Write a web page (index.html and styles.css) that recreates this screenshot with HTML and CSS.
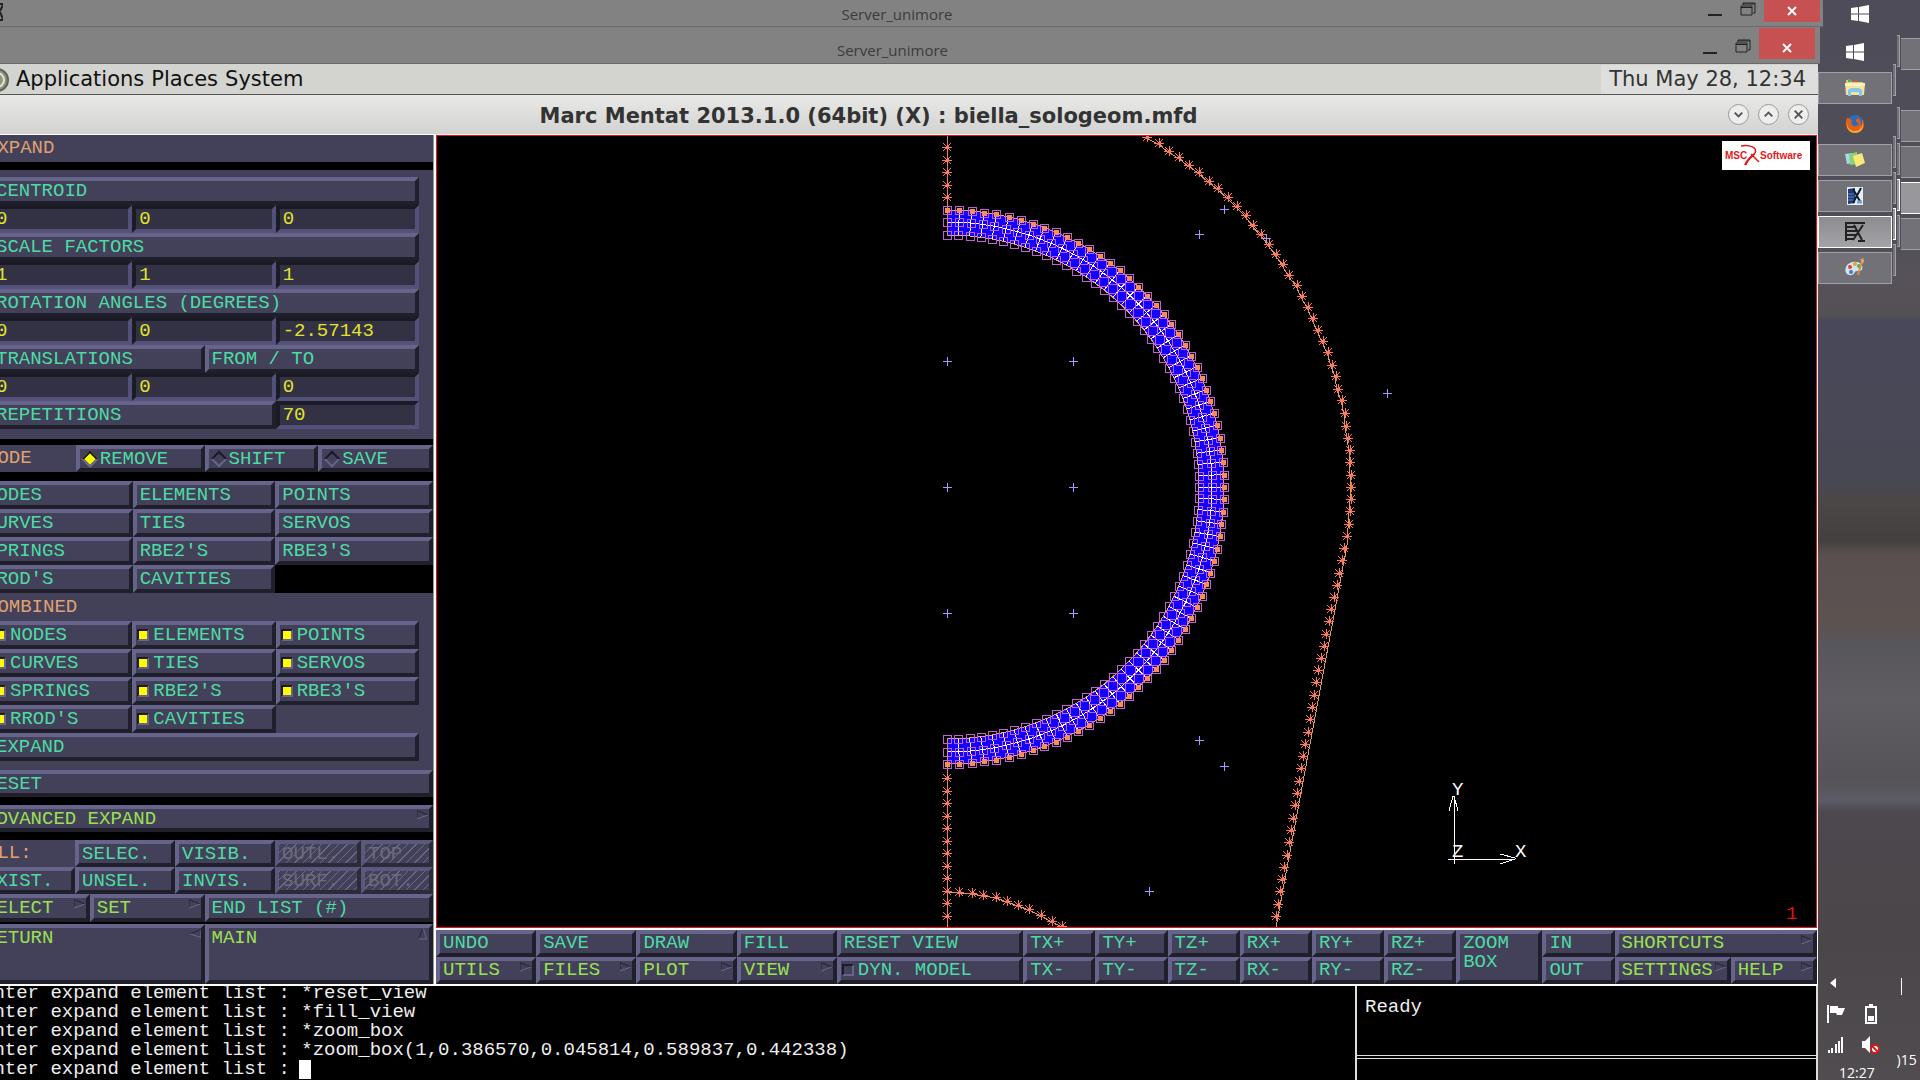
FILE: index.html
```
<!DOCTYPE html>
<html lang="en">
<head>
  <meta charset="UTF-8">
  <title>Server_unimore</title>
  <link rel="stylesheet" href="styles.css">
</head>
<body>
  <div class="screen">
    <div class="session">

      <header class="titlebar titlebar-back">
        <svg class="edge-mark" viewBox="0 0 3 18"><path d="M0 1h3M0 17h3M0 8l3-6M0 9l3 7" stroke="#222" stroke-width="2"/></svg>
        <span class="titlebar-name">Server_unimore</span>
        <div class="win-buttons">
          <button class="win-min" aria-label="Minimize"></button>
          <button class="win-max" aria-label="Restore"><svg viewBox="0 0 16 16"><path d="M1 5h11v9H1zM1 6.500h11M3 4V2h12v10h-2M3 3h12" fill="none" stroke="#222"/></svg></button>
          <button class="win-close" aria-label="Close"><svg viewBox="0 0 12 12"><path d="M2 2l8 8M10 2l-8 8" stroke="#fff" stroke-width="2"/></svg></button>
        </div>
      </header>

      <header class="titlebar titlebar-front">
        <span class="titlebar-name">Server_unimore</span>
        <div class="win-buttons">
          <button class="win-min" aria-label="Minimize"></button>
          <button class="win-max" aria-label="Restore"><svg viewBox="0 0 16 16"><path d="M1 5h11v9H1zM1 6.500h11M3 4V2h12v10h-2M3 3h12" fill="none" stroke="#222"/></svg></button>
          <button class="win-close" aria-label="Close"><svg viewBox="0 0 12 12"><path d="M2 2l8 8M10 2l-8 8" stroke="#fff" stroke-width="2"/></svg></button>
        </div>
      </header>

      <nav class="panel">
        <svg class="panel-logo" viewBox="0 0 24 24"><circle cx="12" cy="12" r="11" fill="#8d957f" stroke="#5d6653" stroke-width="2"/><circle cx="12" cy="12" r="7" fill="none" stroke="#dfe3d6" stroke-width="2"/></svg>
        <a href="#">Applications</a>
        <a href="#">Places</a>
        <a href="#">System</a>
        <span class="clock">Thu May 28, 12:34</span>
      </nav>

      <header class="app-title">
        <h1>Marc Mentat 2013.1.0 (64bit) (X) : biella_sologeom.mfd</h1>
        <div class="round-buttons">
          <button aria-label="Minimize"><svg viewBox="0 0 20 20"><path d="M6 8l4 4 4-4"/></svg></button>
          <button aria-label="Maximize"><svg viewBox="0 0 20 20"><path d="M6 12l4-4 4 4"/></svg></button>
          <button aria-label="Close"><svg viewBox="0 0 20 20"><path d="M6 6l8 8M14 6l-8 8"/></svg></button>
        </div>
      </header>

      <main class="app">
        <aside class="side">
          <h2 class="head head-top">EXPAND</h2>

          <section class="group">
            <button class="btn">CENTROID</button>
            <div class="row three">
              <input class="field" aria-label="Centroid X" value="0"><input class="field" aria-label="Centroid Y" value="0"><input class="field" aria-label="Centroid Z" value="0">
            </div>
            <button class="btn">SCALE FACTORS</button>
            <div class="row three">
              <input class="field" aria-label="Scale X" value="1"><input class="field" aria-label="Scale Y" value="1"><input class="field" aria-label="Scale Z" value="1">
            </div>
            <button class="btn">ROTATION ANGLES (DEGREES)</button>
            <div class="row three">
              <input class="field" aria-label="Rotation X" value="0"><input class="field" aria-label="Rotation Y" value="0"><input class="field" aria-label="Rotation Z" value="-2.57143">
            </div>
            <div class="row two">
              <button class="btn">TRANSLATIONS</button><button class="btn">FROM / TO</button>
            </div>
            <div class="row three">
              <input class="field" aria-label="Translation X" value="0"><input class="field" aria-label="Translation Y" value="0"><input class="field" aria-label="Translation Z" value="0">
            </div>
            <div class="row three">
              <button class="btn wide">REPETITIONS</button><input class="field" aria-label="Repetitions" value="70">
            </div>
          </section>

          <div class="row mode">
            <span class="head">MODE</span>
            <label class="btn"><input type="radio" name="mode" checked>REMOVE</label>
            <label class="btn"><input type="radio" name="mode">SHIFT</label>
            <label class="btn"><input type="radio" name="mode">SAVE</label>
          </div>

          <div class="row kinds">
            <button class="btn">NODES</button><button class="btn">ELEMENTS</button><button class="btn">POINTS</button>
            <button class="btn">CURVES</button><button class="btn">TIES</button><button class="btn">SERVOS</button>
            <button class="btn">SPRINGS</button><button class="btn">RBE2'S</button><button class="btn">RBE3'S</button>
            <button class="btn">RROD'S</button><button class="btn">CAVITIES</button>
          </div>

          <h2 class="head head-combined">COMBINED</h2>
          <section class="group group-combined">
            <div class="row three">
              <label class="btn"><input type="checkbox" checked>NODES</label><label class="btn"><input type="checkbox" checked>ELEMENTS</label><label class="btn"><input type="checkbox" checked>POINTS</label>
              <label class="btn"><input type="checkbox" checked>CURVES</label><label class="btn"><input type="checkbox" checked>TIES</label><label class="btn"><input type="checkbox" checked>SERVOS</label>
              <label class="btn"><input type="checkbox" checked>SPRINGS</label><label class="btn"><input type="checkbox" checked>RBE2'S</label><label class="btn"><input type="checkbox" checked>RBE3'S</label>
              <label class="btn"><input type="checkbox" checked>RROD'S</label><label class="btn"><input type="checkbox" checked>CAVITIES</label>
            </div>
            <button class="btn">EXPAND</button>
          </section>

          <button class="btn reset">RESET</button>
          <button class="btn go advanced">ADVANCED EXPAND<svg class="arrow" viewBox="0 0 12 9"><use href="#arrow-right"/></svg></button>

          <div class="row lists">
            <span class="head">ALL:</span><button class="btn">SELEC.</button><button class="btn">VISIB.</button><button class="btn" disabled>OUTL.</button><button class="btn" disabled>TOP</button>
            <button class="btn">EXIST.</button><button class="btn">UNSEL.</button><button class="btn">INVIS.</button><button class="btn" disabled>SURF.</button><button class="btn" disabled>BOT.</button>
          </div>
          <div class="row select">
            <button class="btn go">SELECT<svg class="arrow" viewBox="0 0 12 9"><use href="#arrow-right"/></svg></button>
            <button class="btn go">SET<svg class="arrow" viewBox="0 0 12 9"><use href="#arrow-right"/></svg></button>
            <button class="btn">END LIST (#)</button>
          </div>
          <div class="row back">
            <button class="btn go">RETURN<svg class="arrow" viewBox="0 0 12 9"><path d="M12 0L1 4.500" stroke="#232330"/><path d="M12 0v8L1 4.500" fill="none" stroke="#6a688c"/></svg></button>
            <button class="btn go">MAIN<svg class="arrow" viewBox="0 0 9 12"><path d="M4 1L0 11" stroke="#232330"/><path d="M5 1l3 10H0" fill="none" stroke="#6a688c"/></svg></button>
          </div>
        </aside>

        <section class="work">
          <div class="view">
            <svg class="model" id="model" viewBox="437 136 1379 791" preserveAspectRatio="none" shape-rendering="crispEdges">
              <defs>
                <g id="arrow-right"><path d="M0 8V0l11 4.500" fill="none" stroke="#232330"/><path d="M0 8.500l11-4" stroke="#6a688c"/></g>
                <path id="star" d="M-5 0H5M0-5V5M-4-4L4 4M4-4L-4 4M-1-1h2v2h-2z" stroke="#fa7860" fill="#fa7860"/>
                <path id="plus" d="M-4 0H5M0-4V5" stroke="#a898ff"/>
              </defs>
              <g class="axes">
                <path d="M1448 859h67M1454 864V797M1449 811l4-15h1l4 15M1500 854l15 4v1l-15 5"/>
                <text x="1452" y="795">Y</text>
                <text x="1515" y="857">X</text>
                <text x="1452" y="857">Z</text>
              </g>
              <text class="view-number" x="1786" y="919">1</text>
            </svg>
            <svg class="msc" viewBox="0 0 88 29" role="img" aria-label="MSC Software">
              <rect width="88" height="29" fill="#fff"/>
              <text x="3" y="18">MSC</text>
              <text x="38" y="18">Software</text>
              <path d="M19 5c9-2 17 2 14 7-2 4-8 6-9 12M29 13l8 8" fill="none" stroke="#e21a1a" stroke-width="1.500"/>
              <path d="M23 24c2-5 6-8 9-11" fill="none" stroke="#e21a1a" stroke-width="2"/>
            </svg>
          </div>
          <div class="tools">
            <button class="btn">UNDO</button><button class="btn">SAVE</button><button class="btn">DRAW</button><button class="btn">FILL</button><button class="btn">RESET VIEW</button>
            <button class="btn">TX+</button><button class="btn">TY+</button><button class="btn">TZ+</button><button class="btn">RX+</button><button class="btn">RY+</button><button class="btn">RZ+</button>
            <button class="btn zoom-box">ZOOM<br>BOX</button><button class="btn">IN</button>
            <button class="btn go shortcuts">SHORTCUTS<svg class="arrow" viewBox="0 0 12 9"><use href="#arrow-right"/></svg></button>

            <button class="btn go">UTILS<svg class="arrow" viewBox="0 0 12 9"><use href="#arrow-right"/></svg></button>
            <button class="btn go">FILES<svg class="arrow" viewBox="0 0 12 9"><use href="#arrow-right"/></svg></button>
            <button class="btn go">PLOT<svg class="arrow" viewBox="0 0 12 9"><use href="#arrow-right"/></svg></button>
            <button class="btn go">VIEW<svg class="arrow" viewBox="0 0 12 9"><use href="#arrow-right"/></svg></button>
            <label class="btn"><input type="checkbox">DYN. MODEL</label>
            <button class="btn">TX-</button><button class="btn">TY-</button><button class="btn">TZ-</button><button class="btn">RX-</button><button class="btn">RY-</button><button class="btn">RZ-</button>
            <button class="btn">OUT</button>
            <button class="btn go">SETTINGS<svg class="arrow" viewBox="0 0 12 9"><use href="#arrow-right"/></svg></button>
            <button class="btn go">HELP<svg class="arrow" viewBox="0 0 12 9"><use href="#arrow-right"/></svg></button>
          </div>
        </section>
      </main>

      <footer class="console">
        <div class="log">
          <p>Enter expand element list : *reset_view</p>
          <p>Enter expand element list : *fill_view</p>
          <p>Enter expand element list : *zoom_box</p>
          <p>Enter expand element list : *zoom_box(1,0.386570,0.045814,0.589837,0.442338)</p>
          <p class="prompt"><label for="command">Enter expand element list :</label><span class="cursor"></span><input id="command" type="text"></p>
        </div>
        <div class="status">
          <p>Ready</p>
          <p></p>
        </div>
      </footer>
    </div>

    <aside class="taskbar">
      <div class="tasks">
        <button class="start" aria-label="Start"><svg viewBox="0 0 18 18"><path d="M0 3l7-1v6.500H0zM8 2l10-2v8.500H8zM0 9.500h7V16l-7-1zM8 9.500h10V18L8 16z" fill="#fff"/></svg></button>
        <button class="start start-front" aria-label="Start"><svg viewBox="0 0 18 18"><path d="M0 3l7-1v6.500H0zM8 2l10-2v8.500H8zM0 9.500h7V16l-7-1zM8 9.500h10V18L8 16z" fill="#fff"/></svg></button>
        <button class="task open" aria-label="Explorer"><svg viewBox="0 0 20 20"><path d="M1 2h5l1 2h11v3H1z" fill="#e8c868"/><path d="M3 1h3v3H3z" fill="#58a858"/><path d="M9 2h3v2H9z" fill="#c85848"/><path d="M0 5h20l-1 12H1z" fill="#f6e3a0"/><path d="M0 5h20v3H0z" fill="#faf0c4"/><path d="M3 18v-6l3-2h8l3 2v6h-3v-4H6v4z" fill="#82c8ea"/></svg></button>
        <button class="task" aria-label="Firefox"><svg viewBox="0 0 20 20"><circle cx="10" cy="10" r="9" fill="#2a6cb8"/><path d="M11 1c3 1 3 3 1 4s-1 3 1 4-1 4-4 3-3-4-2-6C4 5 3 3 2 4c-3 6 0 15 8 15 9 0 11-9 7-14 0 3 0 6-1 7 0-5-2-9-5-11z" fill="#e2601c"/><path d="M2 9c0 5 4 8 8 8 5 0 7-4 8-8 1 6-3 10-8 10S1 15 2 9z" fill="#f6a828"/></svg></button>
        <button class="task open" aria-label="Sticky Notes"><svg viewBox="0 0 20 20"><path d="M0 4l8-1v10l-6 1z" fill="#a8d8f0"/><path d="M4 4l8-2 1 12-8 1z" fill="#8cd078"/><path d="M8 6l9-3 3 10-9 4z" fill="#fae878"/></svg></button>
        <button class="task open" aria-label="Exceed"><svg viewBox="0 0 20 20"><path d="M2 1h16v18H2z" fill="#e8eef4"/><path d="M3 3l7-1v15l-7 1z" fill="#1c3c78"/><path d="M3 8h6M3 11h6M3 14h6" stroke="#6088b8"/><path d="M8 3l8 14M16 2L8 17" stroke="#101c34" stroke-width="2"/><path d="M12 16h5" stroke="#74a4d8" stroke-width="3"/></svg></button>
        <button class="task open active" aria-label="X session"><svg viewBox="0 0 20 20"><path d="M0 1h20M0 5h11M0 9h12M0 13h11M0 17h9M13 19h7M13 1h5M1 1v18M9 3l8 15M18 3L8 18" stroke="#222" stroke-width="2"/></svg></button>
        <button class="task open" aria-label="Paint"><svg viewBox="0 0 20 20"><path d="M1 9c2-5 11-7 15-3 3 4 1 8-4 7-3 0-2 3-5 4-5 1-8-3-6-8z" fill="#cfe4f0"/><circle cx="5" cy="9" r="2" fill="#d84838"/><circle cx="10" cy="6" r="2" fill="#e8a030"/><circle cx="6" cy="14" r="2" fill="#4878c8"/><circle cx="14" cy="8" r="2" fill="#58a850"/><path d="M18 0l-5 17" stroke="#d89040" stroke-width="2"/><path d="M15 1l4 1-1 4z" fill="#e8b060"/></svg></button>
        <div class="tray">
          <svg class="tray-more" viewBox="0 0 6 10"><path d="M6 0v10L0 5z" fill="#fff"/></svg>
          <div class="tray-row">
            <svg viewBox="0 0 18 20"><path d="M1 1v18" stroke="#fff" stroke-width="2"/><path d="M3 2h8v2h7l-3 7h-5l-1-2H3z" fill="#fff"/></svg>
            <svg viewBox="0 0 18 20"><path d="M4 3h10v16H4zM7 1h4" fill="none" stroke="#fff" stroke-width="2"/><path d="M6 12h6v5H6z" fill="#fff"/></svg>
          </div>
          <div class="tray-row">
            <svg viewBox="0 0 18 20"><path d="M2 15v3M5 13v5M9 9v9M12 6v12M15 2v16" stroke="#fff" stroke-width="2"/></svg>
            <svg viewBox="0 0 18 20"><path d="M0 6h3l5-5v17l-5-5H0z" fill="#fff"/><circle cx="13" cy="14" r="4" fill="#fff" stroke="#d41c1c" stroke-width="2"/><path d="M10 11l6 6" stroke="#d41c1c" stroke-width="2"/></svg>
          </div>
          <time>12:27</time>
        </div>
      </div>
      <div class="slices slices-near"><i></i><i class="gap"></i><i></i><i></i><i class="lit"></i><i></i></div>
      <div class="slices slices-mid"><i></i><i class="gap"></i><i></i><i></i><i class="lit"></i><i></i></div>
      <div class="slices slices-far"><i></i><i class="gap"></i><i></i><i></i><i class="lit"></i><i></i>
        <span class="far-bar"></span>
        <span class="far-year">)15</span>
      </div>
    </aside>
  </div>
  <script src="script.js"></script>
</body>
</html>
```

FILE: styles.css
```
*{
  box-sizing: border-box;
  margin: 0;
  padding: 0;
}
body{
  background-color: #000;
  overflow: hidden;
}
button, input{
  font: inherit;
  color: inherit;
  border: 0;
  border-radius: 0;
  background: none;
}
.screen{
  display: flex;
  min-height: 100vh;
}
.session{
  flex: 1;
  min-width: 0;
  display: flex;
  flex-direction: column;
}

/* remote desktop title bars */
.titlebar{
  position: relative;
  z-index: 1;
  display: grid;
  grid-template-columns: 1fr auto 1fr;
  background-color: #828282;
  border-bottom: 1px solid #6a6a6a;
  font: 15px/28px "Open Sans", sans-serif;
  color: #3c3c3c;
}
.titlebar-back{
  height: 27px;
  margin-right: -5px;
  padding-right: 3px;
}
.titlebar-front{
  height: 37px;
  margin-right: -2px;
  padding: 9px 5px 0 0;
  margin-left: -22px;
}
.edge-mark{
  width: 3px;
  height: 18px;
  margin-top: 3px;
  grid-column: 1;
  grid-row: 1;
}
.titlebar-name{
  grid-column: 2;
}
.titlebar-back .titlebar-name{
  padding-right: 26px;
}
.titlebar-front .titlebar-name{
  padding-right: 8px;
}
.win-buttons{
  display: flex;
  justify-content: flex-end;
  grid-column: 3;
}
.win-min{
  width: 14px;
  height: 16px;
  border-bottom: 2px solid #222;
}
.win-max{
  width: 16px;
  height: 16px;
  margin: 1px 8px 0 18px;
}
.win-max svg{
  display: block;
}
.win-close{
  display: flex;
  align-items: center;
  justify-content: center;
  width: 56px;
  height: 22px;
  background-color: #c75050;
}
.titlebar-front .win-min, .titlebar-front .win-max{
  margin-top: 2px;
}
.titlebar-front .win-close{
  height: 32px;
  margin-top: -9px;
  padding-top: 8px;
  border-top: 1px solid #828282;
}
.win-close svg{
  width: 12px;
}

/* gnome panel */
.panel{
  display: flex;
  align-items: center;
  gap: 7px;
  height: 31px;
  padding-top: 1px;
  background-color: #d3d3cf;
  border-bottom: 1px solid #555;
  font: 21px/29px "DejaVu Sans", sans-serif;
}
.panel a{
  color: #111;
  text-decoration: none;
}
.panel-logo{
  width: 24px;
  margin-left: -15px;
}
.clock{
  margin-left: auto;
  padding: 0 12px 0 8px;
  background-color: #dededc;
  color: #333;
}
.app-title{
  display: grid;
  grid-template-columns: 1fr auto 1fr;
  align-items: center;
  height: 39px;
  padding: 2px 9px 0 0;
  margin-left: -72px;
  background-image: linear-gradient(#e9e9e8, #d2d2d1);
}
.app-title h1{
  grid-column: 2;
  font: bold 21px/36px "DejaVu Sans", sans-serif;
  color: #333;
}
.round-buttons{
  display: flex;
  justify-content: flex-end;
  gap: 9px;
  padding-bottom: 2px;
}
.round-buttons button{
  width: 21px;
  height: 21px;
  border: 1px solid #999;
  border-radius: 50%;
  background-color: #eee;
}
.round-buttons svg{
  display: block;
  fill: none;
  stroke: #555;
  stroke-width: 2;
}

/* the program itself, its left edge is off the screen */
.app{
  flex: 1;
  display: grid;
  grid-template-columns: 456px 1fr;
  margin-left: -22px;
  border: 1px solid #fff;
  border-width: 1px 1px 2px 0;
  font: 19px/20px "Liberation Mono", monospace;
}
.side{
  display: flex;
  flex-direction: column;
  border-right: 1px solid #999;
  background-color: #000;
}
.head{
  padding-left: 8px;
  background-color: #424159;
  color: #e0a070;
  font-size: 19px;
  font-weight: normal;
  line-height: 27px;
}
.head-top{
  margin-bottom: 8px;
}
.head-combined{
  line-height: 28px;
}
.group{
  display: flex;
  flex-direction: column;
  padding: 7px 14px 10px 11px;
  margin-bottom: 6px;
  background-color: #424159;
}
.group-combined{
  padding: 0 14px 9px 11px;
  margin-bottom: 0;
}
.btn{
  display: flex;
  align-items: center;
  min-width: 0;
  height: 28px;
  padding-left: 3px;
  border: 4px solid;
  border-color: #66648a #20202c #20202c #66648a;
  background-color: #424159;
  color: #4edaa4;
  text-align: left;
  white-space: nowrap;
}
.go{
  color: #9be052;
}
.field{
  min-width: 0;
  width: 100%;
  height: 28px;
  padding-left: 3px;
  border: 4px solid;
  border-color: #1b1b26 #53517a #53517a #1b1b26;
  background-color: #333244;
  color: #e2e22e;
}
.row{
  display: grid;
}
.three{
  grid-template-columns: repeat(3, 1fr);
}
.two{
  grid-template-columns: 215fr 214fr;
}
.wide{
  grid-column: span 2;
}
.mode{
  grid-template-columns: 98fr 129fr 114fr 115fr;
  margin-bottom: 9px;
}
.mode .btn, .lists .btn, .reset, .advanced{
  height: 27px;
}
.kinds{
  grid-template-columns: 155fr 143fr 158fr;
}
.reset, .advanced{
  margin-bottom: 8px;
}
.lists{
  grid-template-columns: 97fr 100fr 100fr 86fr 72fr;
}
.select{
  grid-template-columns: 112fr 115fr 229fr;
  margin-bottom: 2px;
}
.back{
  flex: 1;
  grid-template-columns: 227fr 229fr;
}
.back .btn{
  height: auto;
  align-items: flex-start;
}
.btn:disabled{
  color: #6c6b78;
  background-image: repeating-linear-gradient(135deg, #6a688a 0, #6a688a 1px, transparent 1px, transparent 6px);
  border-color: #5a587c #2c2b3a #2c2b3a #5a587c;
}
.arrow{
  flex: none;
  align-self: flex-start;
  width: 12px;
  height: 12px;
  margin-left: auto;
}
.btn input{
  appearance: none;
  flex: none;
  width: 12px;
  height: 12px;
  margin-right: 4px;
  margin-left: -2px;
  border: 2px solid;
  border-color: #1b1b26 #66648a #66648a #1b1b26;
}
.btn input:checked{
  background-color: #fdfd00;
}
.btn input[type="radio"]{
  margin: 0 4px 0 1px;
  transform: rotate(45deg);
}

/* graphics window */
.work{
  display: flex;
  flex-direction: column;
  min-width: 0;
  border-left: 2px solid #fff;
}
.view{
  position: relative;
  flex: 1;
  display: flex;
  border: 1px solid #f01010;
  background-color: #000;
}
.model{
  flex: 1;
  width: 100%;
  min-height: 0;
}
.axes path{
  fill: none;
  stroke: #fff;
}
.axes text{
  fill: #fff;
}
.view-number{
  fill: #e01010;
}
.msc{
  position: absolute;
  top: 5px;
  right: 6px;
  width: 88px;
  height: 29px;
}
.msc text{
  font: bold 10px "Liberation Sans Narrow", "Liberation Sans", sans-serif;
  fill: #e21a1a;
}
.tools{
  display: grid;
  grid-template-columns: repeat(4, 100fr) 186fr repeat(6, 72fr) 86fr 72fr 116fr 86fr;
  grid-template-rows: 27px 27px;
  border-top: 2px solid #fff;
  background-color: #20202c;
}
.tools .btn{
  height: 27px;
  padding-bottom: 2px;
}
.tools .zoom-box{
  grid-row: span 2;
  height: 54px;
  line-height: 19px;
  align-items: flex-start;
}
.shortcuts{
  grid-column: span 2;
}

/* command log and status line */
.console{
  display: grid;
  grid-template-columns: 1355fr 463fr;
  height: 94px;
  background-color: #000;
  color: #eee;
  font: 19px/19px "Liberation Mono", monospace;
}
.log{
  display: flex;
  flex-direction: column;
  justify-content: flex-end;
  overflow: hidden;
  padding-bottom: 4px;
  margin-left: -18px;
  white-space: pre;
}
.prompt{
  display: flex;
}
.cursor{
  width: 12px;
  height: 19px;
  margin-left: 9px;
  background-color: #fff;
}
.prompt input{
  flex: 1;
  height: 19px;
}
.status{
  display: flex;
  flex-direction: column;
  gap: 2px;
  border: 2px solid #ddd;
  border-width: 0 2px;
}
.status p{
  padding: 12px 8px;
  height: 70px;
  border-bottom: 1px solid #ddd;
}
.status p + p{
  flex: 1;
  border-top: 1px solid #ddd;
  border-bottom: 0;
}

/* windows taskbar */
.taskbar{
  display: flex;
  width: 102px;
  background-image: linear-gradient(#4d4c58 0, #504e58 220px, #57525a 280px, #555055 316px, #48485a 320px, #484854 480px, #4b4747 500px, #444040 540px, #5a504f 555px, #5c5250 625px, #57565a 642px, #605d62 700px, #565358 780px, #5b5c66 801px, #4c484d 812px, #4a464a 940px, #504c50 1080px);
}
.tasks{
  display: flex;
  flex-direction: column;
  width: 76px;
}
.start{
  height: 28px;
  padding-left: 10px;
}
.start svg{
  width: 18px;
  height: 18px;
  display: block;
  margin: auto;
}
.start-front{
  height: 44px;
  padding: 3px 0 0;
}
.task{
  display: flex;
  align-items: center;
  justify-content: center;
  height: 32px;
  margin-bottom: 4px;
  border: 1px solid transparent;
}
.task svg{
  width: 20px;
  height: 20px;
}
.open{
  border-color: #a0a0a4;
  background-color: #727178;
}
.active{
  border-color: #fff;
  background-image: linear-gradient(#8c8b90, #a4a4a8);
}
.tray{
  display: flex;
  flex-direction: column;
  gap: 11px;
  margin-top: auto;
  padding-left: 9px;
  color: #fff;
  font: 14px/14px "Open Sans", sans-serif;
}
.tray-more{
  width: 6px;
  height: 10px;
  margin: 0 0 5px 3px;
}
.tray-row{
  display: flex;
  gap: 17px;
}
.tray-row svg{
  width: 18px;
  height: 20px;
}
.tray time{
  padding-left: 12px;
}
.slices{
  display: flex;
  flex-direction: column;
  gap: 4px;
  width: 3px;
  margin-left: 1px;
}
.slices i{
  height: 32px;
  border: 1px solid #a0a0a4;
  border-left: 0;
  background-color: #727178;
}
.slices .gap{
  visibility: hidden;
}
.slices .lit{
  border-color: #fff;
  background-color: #98989c;
}
.slices-near{
  padding-top: 64px;
}
.slices-mid{
  padding-top: 35px;
}
.slices-far{
  width: 20px;
  padding-top: 38px;
}
.slices-far i{
  border-right: 0;
}
.far-bar{
  width: 1px;
  height: 17px;
  margin-top: auto;
  background-color: #fff;
}
.far-year{
  margin: 52px 0 11px -4px;
  color: #fff;
  font: 14px/18px "Open Sans", sans-serif;
}
```

FILE: script.js
```
window.onload = function(){
  var ns = "http://www.w3.org/2000/svg";
  var model = document.getElementById("model");
  var axes = model.querySelector(".axes");

  function add(tag, attrs){
    var el = document.createElementNS(ns, tag);
    for (var key in attrs) {
      el.setAttribute(key, attrs[key]);
    }
    model.insertBefore(el, axes);
  }
  function put(id, x, y){
    add("use", {href: "#" + id, x: Math.round(x), y: Math.round(y)});
  }
  function curve(points, color){
    add("polyline", {points: points.join(" "), fill: "none", stroke: color});
  }

  // half ring: centre, node radii and number of repetitions
  var cx = 947, cy = 487, steps = 70;
  var radii = [252, 265, 277];
  function node(r, i){
    var a = Math.PI * (i / steps - 0.5);
    return [cx + r * Math.cos(a), cy + r * Math.sin(a)];
  }
  function arc(r){
    var pts = [];
    for (var i = 0; i <= steps; i++) {
      pts.push(node(r, i));
    }
    return pts;
  }

  add("polygon", {points: arc(277).concat(arc(252).reverse()).join(" "), fill: "#1400ff"});
  for (var i = 0; i <= steps; i++) {
    curve([node(252, i), node(277, i)], "#ffffff");
  }
  curve(arc(265), "#ffffff");
  curve(arc(252), "#f0a080");
  curve(arc(277), "#f0a050");

  // symmetry axis, open inside the ring
  curve([[947, 136], [947, 236]], "#d89048");
  curve([[947, 738], [947, 927]], "#d89048");
  for (var y = 197; y > 136; y -= 12.5) {
    put("star", 947, y);
  }
  for (y = 778; y < 926; y += 12.5) {
    put("star", 947, y);
  }

  // nodes of the ring
  for (i = 0; i <= steps; i++) {
    for (var k = 0; k < radii.length; k++) {
      var p = node(radii[k], i);
      if (k == 2) {
        add("rect", {x: Math.round(p[0]) - 2, y: Math.round(p[1]) - 2, width: 5, height: 5, fill: "#fa8a60"});
      }
      add("rect", {x: Math.round(p[0]) - 4 + 0.5, y: Math.round(p[1]) - 4 + 0.5, width: 8, height: 8, fill: "none", stroke: "#c060d8"});
    }
  }

  // outer profile of the rod
  var outer = [[1147,137],[1159,143],[1169,151],[1179,157],[1189,165],[1199,172],[1209,181],[1218,188],[1228,197],
    [1237,206],[1246,215],[1253,225],[1261,234],[1269,244],[1276,254],[1283,264],[1289,275],[1297,285],[1302,296],
    [1308,307],[1313,318],[1318,330],[1323,341],[1328,352],[1332,365],[1336,376],[1338,389],[1342,400],[1345,413],
    [1346,426],[1348,438],[1350,450],[1350,462],[1351,475],[1351,487],[1351,499],[1350,511],[1349,524],[1347,536]];
  var line = outer.slice(0, 37).map(function(p){ return [p[0] - 1, p[1] + 1]; });
  curve(line.concat([[1347, 545], [1276, 927]]), "#e0a050");
  for (i = 1; i <= 11; i++) {
    outer.push([1347 - i * 2.6, 536 + i * 12.2]);
  }
  for (i = 1; i <= 20; i++) {
    outer.push([1318 - i * 2.1, 670 + i * 12.3]);
  }
  outer.forEach(function(p){ put("star", p[0], p[1]); });

  // small end
  var small = [[947,891],[959,892],[972,893],[983,895],[996,897],[1007,901],[1018,905],[1029,909],[1041,915],[1052,921],[1062,926]];
  curve(small.map(function(p){ return [p[0], p[1] + 1]; }), "#e0a050");
  small.forEach(function(p){ put("star", p[0], p[1]); });

  // construction points
  [[947,361],[1073,361],[947,487],[1073,487],[947,613],[1073,613],[1199,234],[1224,209],[1266,238],
   [1387,393],[1199,740],[1224,766],[1149,891]].forEach(function(p){ put("plus", p[0], p[1]); });
}
```
